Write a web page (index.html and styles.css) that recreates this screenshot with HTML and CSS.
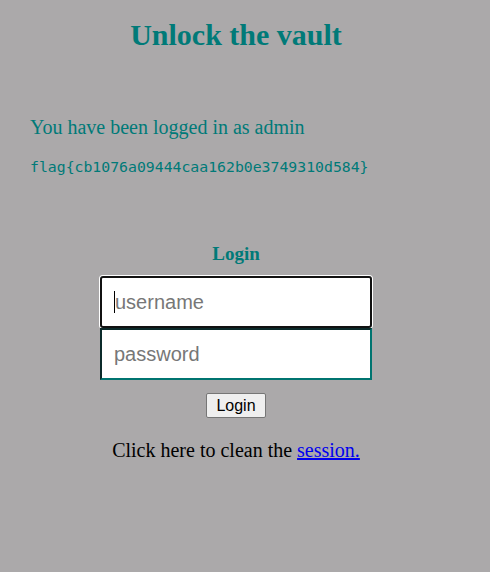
FILE: index.html
```html
<!DOCTYPE html>
<html>
<head>
<meta charset="utf-8">
<link rel="stylesheet" href="styles.css">
</head>
<body>
<h1 class="title">Unlock the vault</h1>
<div class="status">
  <p class="logged">You have been logged in as admin</p>
  <p class="flag">flag{cb1076a09444caa162b0e3749310d584}</p>
</div>
<form class="login">
  <h3 class="login-title">Login</h3>
  <div class="field focused"><span class="caret"></span><span class="ph">username</span></div>
  <div class="field pw"><span class="ph">password</span></div>
  <button type="button" class="btn">Login</button>
  <p class="clean">Click here to clean the <a href="#">session.</a></p>
</form>
</body>
</html>
```
FILE: styles.css
```css
html, body {
  background: #aba9aa;
}
body {
  margin: 0;
  padding: 8px 26px 8px 8px;
  font-family: "Liberation Serif", "Times New Roman", serif;
  color: #000;
}
.title {
  margin: 9px 0 0;
  text-align: center;
  font-size: 30px;
  font-weight: bold;
  color: #007a78;
  line-height: 36px;
}
.status {
  padding: 0 22px;
  margin-top: 62px;
  color: #007a78;
}
.logged {
  margin: 0;
  font-size: 20px;
  line-height: 24px;
}
.flag {
  margin: 18px 0 0;
  font-family: "DejaVu Sans Mono", "Liberation Mono", monospace;
  font-size: 14.8px;
  line-height: 20px;
}
.login {
  margin-top: 65px;
  display: flex;
  flex-direction: column;
  align-items: center;
}
.login-title {
  margin: 0 0 10px;
  font-size: 19px;
  line-height: 24px;
  color: #007a78;
}
.field {
  box-sizing: border-box;
  width: 272px;
  height: 52px;
  background: #fff;
  display: flex;
  align-items: center;
  padding-left: 12px;
  font-family: "Liberation Sans", Arial, sans-serif;
  font-size: 20px;
  color: #777;
}
.focused {
  border: 2px solid #111;
  border-radius: 3px;
  box-shadow: 0 0 0 1px #fff;
}
.caret {
  width: 1px;
  height: 22px;
  background: #000;
}
.pw {
  border: 2px solid #007470;
  border-top-color: #0b2a2a;
  border-left-color: #0b2a2a;
}
.btn {
  box-sizing: border-box;
  margin-top: 13px;
  font-family: "Liberation Sans", Arial, sans-serif;
  font-size: 16px;
  padding: 1px 9px;
  height: 25px;
  width: 60px;
  background: #efefef;
  border: 1px solid #767676;
  border-radius: 2px;
  color: #000;
}
.clean {
  margin: 20px 0 0;
  font-size: 20px;
  line-height: 24px;
}
.clean a {
  color: #0000ee;
}
```
